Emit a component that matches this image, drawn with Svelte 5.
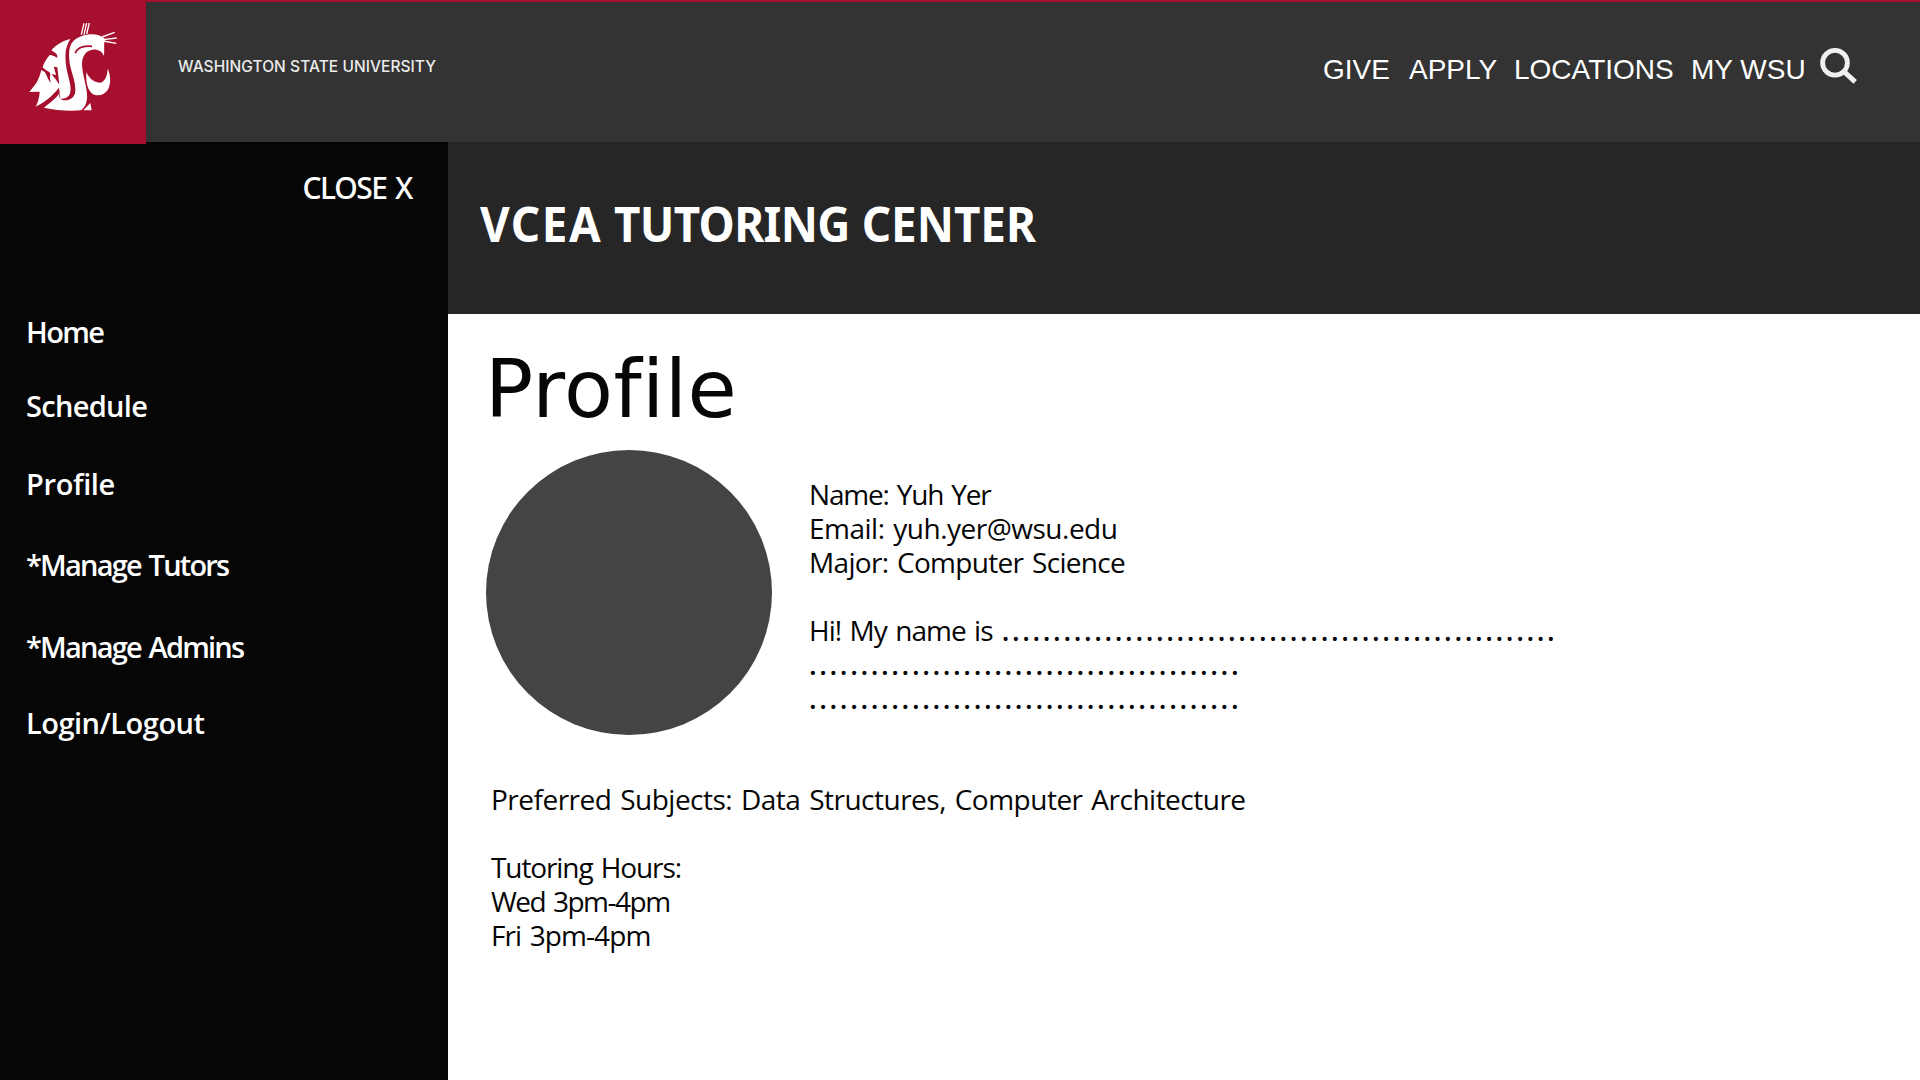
<script>
  const topLinks = [
    { label: 'GIVE', cls: 'give' },
    { label: 'APPLY', cls: 'apply' },
    { label: 'LOCATIONS', cls: 'locations' },
    { label: 'MY WSU', cls: 'my' }
  ];
  const menu = [
    { label: 'Home', tracking: -1.6 },
    { label: 'Schedule', tracking: -0.7 },
    { label: 'Profile', tracking: -0.35 },
    { label: '*Manage Tutors', tracking: -1.8 },
    { label: '*Manage Admins', tracking: -1.8 },
    { label: 'Login/Logout', tracking: -0.5 }
  ];
  const about = [
    { text: 'Name: Yuh Yer', tracking: -1.2 },
    { text: 'Email: yuh.yer@wsu.edu', tracking: -0.5 },
    { text: 'Major: Computer Science', tracking: -0.68 },
    { text: '', tracking: 0 },
    { text: 'Hi! My name is', tracking: -0.95, dots: 54 },
    { text: '', tracking: 0, dots: 42 },
    { text: '', tracking: 0, dots: 42 }
  ];
  const details = [
    { text: 'Preferred Subjects: Data Structures, Computer Architecture', tracking: -0.5 },
    { text: '', tracking: 0 },
    { text: 'Tutoring Hours:', tracking: -1.1 },
    { text: 'Wed 3pm-4pm', tracking: -1.5 },
    { text: 'Fri 3pm-4pm', tracking: -0.9 }
  ];
</script>

<div class="page">
  <header>
    <div class="logo">
      <svg viewBox="0 0 438 432" width="146" height="144" aria-label="WSU Cougars">
        <g fill="#fff">
          <path d="M211 117C188 122 166 136 154 151L163 157C169 160 173 165 172 174C164 169 158 166 149 165C139 177 131 190 128 202L135 208C141 214 149 214 151 222C150 230 149 238 153 248C143 240 140 222 134 216L124 210C120 225 116 238 109 249L88 276L119 275C118 292 114 307 107 320C124 312 154 293 177 263L181 296C196 298 208 290 211 277C214 262 209 246 204 225C198 200 194 172 198 149C201 136 206 126 211 117ZM172 202L178 254C170 240 160 230 155 222L168 225C166 215 164 208 161 200Z" fill-rule="evenodd" />
          <path d="M213 133C222 117 239 108 260 104C285 100 304 106 316 118C310 129 314 146 312 168C306 153 292 147 277 149C255 152 246 172 246 194C247 222 259 253 261 281C263 302 257 322 242 331C207 334 166 331 132 323C148 309 166 299 178 280C176 294 181 301 195 301C216 300 225 288 226 272C227 239 210 210 208 181C206 162 207 145 213 133Z" />
          <path d="M259 216C267 235 281 247 299 248C313 247 322 230 323 206C333 226 333 254 323 270C312 287 291 290 277 281C262 270 257 244 259 216Z" />
          <path d="M250 331L271 309L275 331Z" />
        </g>
        <path d="M226 160C231 144 248 136 276 139" fill="none" stroke="#a60f2d" stroke-width="5" />
        <path d="M244 104L252 70M252 104L260 69M260 102L268 69M306 111L344 97M310 119L350 114M310 123L349 130" fill="none" stroke="#fff" stroke-width="4" />
      </svg>
    </div>
    <div class="university">WASHINGTON STATE UNIVERSITY</div>
    <nav class="links">
      {#each topLinks as link}<span class={link.cls}>{link.label}</span>{/each}
    </nav>
    <svg class="search" viewBox="0 0 40 40" width="40" height="40" aria-label="Search">
      <circle cx="15" cy="14.8" r="12.4" fill="none" stroke="#f0f0f2" stroke-width="4.8" />
      <path d="M24 23.6L35.2 33.8" stroke="#f0f0f2" stroke-width="5" />
    </svg>
  </header>

  <div class="body">
    <aside>
      <div class="close">CLOSE X</div>
      <nav class="menu">
        {#each menu as item}
          <span style="letter-spacing: {item.tracking}px">{item.label}</span>
        {/each}
      </nav>
    </aside>

    <main>
      <div class="banner">
        <h1><span class="loose">VCEA</span> <span class="tight">TUTORING</span> CENTER</h1>
      </div>
      <section class="profile">
        <h2>Profile</h2>
        <div class="card">
          <div class="avatar"></div>
          <div class="about">
            {#each about as line}
              <div class="line">
                <span style="letter-spacing: {line.tracking}px">{line.text}</span>{#if line.dots}<span class="dots">{'.'.repeat(line.dots)}</span>{/if}
              </div>
            {/each}
          </div>
        </div>
        <div class="details">
          {#each details as line}
            <div class="line"><span style="letter-spacing: {line.tracking}px">{line.text}</span></div>
          {/each}
        </div>
      </section>
    </main>
  </div>
</div>

<style>
  :global(body) {
    margin: 0;
    background: #fff;
  }
  .page {
    display: flex;
    flex-direction: column;
    width: 1920px;
    height: 1080px;
    overflow: hidden;
    font-family: 'Open Sans', 'Noto Sans', sans-serif;
    color: #060606;
  }
  header {
    display: flex;
    align-items: flex-start;
    height: 142px;
    box-sizing: border-box;
    border-top: 2px solid #a60f2d;
    background: #333;
  }
  .logo {
    flex: none;
    width: 146px;
    height: 144px;
    margin-top: -2px;
    background: #a60f2d;
    position: relative;
    z-index: 1;
  }
  .logo svg {
    display: block;
  }
  .university {
    margin: 53px 0 0 32px;
    color: #ececec;
    font: 500 15.5px/24px Inter, sans-serif;
    letter-spacing: 0.05px;
    white-space: nowrap;
  }
  .links {
    display: flex;
    margin: 48px 0 0 auto;
    color: #fff;
    font: 28px/40px 'Liberation Sans', sans-serif;
    white-space: nowrap;
  }
  .give { width: 86px; }
  .apply { width: 105px; }
  .locations { width: 177px; }
  .my { width: 125px; }
  .search {
    margin: 46px 60px 0 4px;
  }
  .body {
    display: flex;
    flex: 1;
  }
  aside {
    width: 448px;
    box-sizing: border-box;
    padding: 26px 0 0 26px;
    background: #060606;
    color: #fff;
  }
  .close {
    margin-right: 36px;
    text-align: right;
    font: 500 30px/40px 'Noto Sans', sans-serif;
    letter-spacing: -1.4px;
    word-spacing: 2px;
  }
  .menu {
    display: grid;
    grid-template-rows: 74px 78px 81px 82px 76px 40px;
    margin-top: 104px;
    font-size: 29px;
    font-weight: 600;
    line-height: 40px;
    word-spacing: 2px;
    white-space: nowrap;
  }
  main {
    flex: 1;
    background: #fff;
  }
  .banner {
    height: 172px;
    box-sizing: border-box;
    padding: 52px 0 0 32px;
    background: #262626;
  }
  h1 {
    margin: 0;
    color: #fff;
    font: 700 48px/60px 'Noto Sans', sans-serif;
    transform: scaleX(0.954);
    transform-origin: left;
  }
  .loose {
    letter-spacing: 1.6px;
  }
  .tight {
    letter-spacing: -0.7px;
  }
  .profile {
    padding: 36px 0 0 38px;
  }
  h2 {
    margin: 0 0 0 -1px;
    font: 400 80px/80px 'DejaVu Sans', sans-serif;
    letter-spacing: 0.5px;
  }
  .card {
    display: flex;
    gap: 37px;
    margin-top: 20px;
  }
  .avatar {
    width: 286px;
    height: 285px;
    border-radius: 50%;
    background: #444;
  }
  .about {
    margin-top: 27px;
  }
  .line {
    height: 34px;
    font-size: 28px;
    line-height: 34px;
    word-spacing: 2px;
    white-space: nowrap;
  }
  .dots {
    font-weight: 600;
    letter-spacing: 2.62px;
  }
  .line span:not(:empty) + .dots {
    margin-left: 9px;
  }
  .details {
    margin: 47px 0 0 5px;
  }
</style>
